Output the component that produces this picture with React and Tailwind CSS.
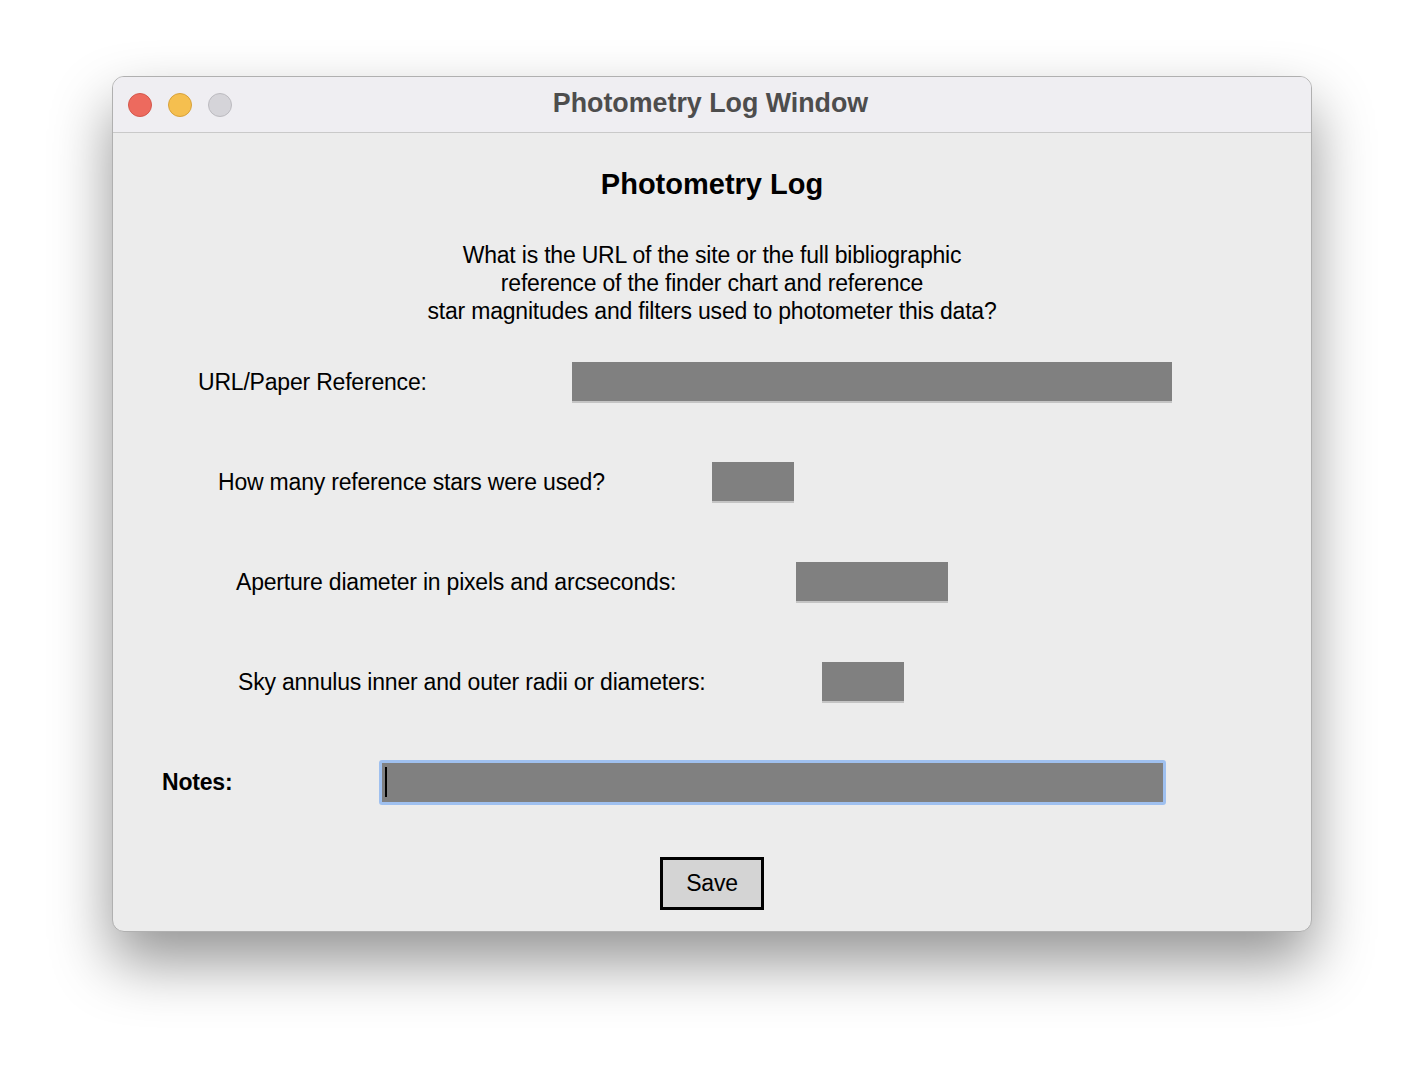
import React from "react";

const font = { fontFamily: '"Liberation Sans", Arial, sans-serif' };

function Field({ w }) {
  return <div className={`h-[41px] bg-[#808080] border-b-2 border-[#c4c4c4] ${w}`} />;
}

export default function App() {
  return (
    <div className="w-[1424px] h-[1080px] bg-white relative overflow-hidden" style={font}>
      <div className="absolute left-[112px] top-[76px] w-[1200px] h-[856px] rounded-[12px] bg-[#ececec] border border-[#b0b0b0] shadow-[0_30px_60px_rgba(0,0,0,0.42)] overflow-hidden flex flex-col">
        {/* title bar */}
        <div className="h-[56px] shrink-0 bg-[#efeef2] border-b border-[#c9c9c9] flex items-center relative">
          <div className="flex items-center gap-[16px] pl-[15px]">
            <div className="w-[24px] h-[24px] rounded-full bg-[#ed6a5e] border border-[#d4574c]" />
            <div className="w-[24px] h-[24px] rounded-full bg-[#f5bf4f] border border-[#d8a23b]" />
            <div className="w-[24px] h-[24px] rounded-full bg-[#d5d4d9] border border-[#bcbbc0]" />
          </div>
          <div className="absolute inset-0 flex items-center justify-center text-[26.8px] font-bold text-[#4d4d4d] pb-[2px] pr-[3px]">
            Photometry Log Window
          </div>
        </div>
        {/* content */}
        <div className="flex flex-col text-black">
          <div className="mt-[33px] text-center text-[29px] font-bold leading-[36px]">Photometry Log</div>
          <div className="mt-[39px] text-center text-[23px] leading-[28px] tracking-[-0.2px]">
            <div>What is the URL of the site or the full bibliographic</div>
            <div>reference of the finder chart and reference</div>
            <div>star magnitudes and filters used to photometer this data?</div>
          </div>
          <div className="mt-[7px] flex flex-col text-[23px] tracking-[-0.2px]">
            <div className="h-[100px] flex items-center">
              <div className="w-[459px] pl-[85px]">URL/Paper Reference:</div>
              <Field w="w-[600px]" />
            </div>
            <div className="h-[100px] flex items-center">
              <div className="w-[599px] pl-[105px]">How many reference stars were used?</div>
              <Field w="w-[82px]" />
            </div>
            <div className="h-[100px] flex items-center">
              <div className="w-[683px] pl-[123px]">Aperture diameter in pixels and arcseconds:</div>
              <Field w="w-[152px]" />
            </div>
            <div className="h-[100px] flex items-center">
              <div className="w-[709px] pl-[125px]">Sky annulus inner and outer radii or diameters:</div>
              <Field w="w-[82px]" />
            </div>
            <div className="h-[100px] flex items-center">
              <div className="w-[266px] pl-[49px] font-bold">Notes:</div>
              <div className="w-[787px] h-[45px] rounded-[3px] border-[3px] border-[#9fc0ef] bg-[#808080] flex items-center pl-[3px]">
                <div className="w-[2px] h-[30px] bg-black" />
              </div>
            </div>
          </div>
          <div className="mt-[25px] flex justify-center">
            <div className="w-[104px] h-[53px] border-[3px] border-black bg-[#d4d4d4] flex items-center justify-center text-[23px] tracking-[-0.2px]">
              Save
            </div>
          </div>
        </div>
      </div>
    </div>
  );
}
